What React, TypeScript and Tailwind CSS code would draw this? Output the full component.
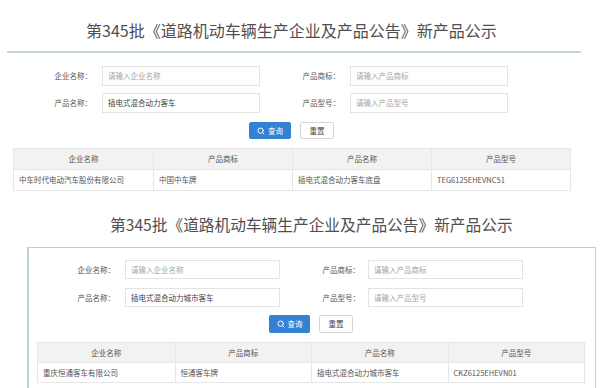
import React from 'react';
import { Search } from 'lucide-react';

type Row = { company: string; brand: string; product: string; model: string };

const font = { fontFamily: '"Noto Sans CJK SC", "Noto Sans", sans-serif' };

function Field({ label, value, placeholder, labelW, inputW, h, gap }: {
  label: string;
  value?: string;
  placeholder: string;
  labelW: string;
  inputW: string;
  h: string;
  gap: string;
}) {
  return (
    <div className={`flex items-center ${gap}`}>
      <span className={`${labelW} text-right text-[7.5px] text-[#555]`}>{label}：</span>
      <div className={`${inputW} ${h} flex items-center border border-[#e3e3e3] bg-white px-[5px] text-[7.5px]`}>
        {value ? <span className="text-[#444]">{value}</span> : <span className="text-[#a5a5a5]">{placeholder}</span>}
      </div>
    </div>
  );
}

function Buttons({ h, qw, rw }: { h: string; qw: string; rw: string }) {
  return (
    <div className="flex gap-[9px]">
      <button className={`${qw} ${h} flex items-center justify-center gap-[3px] rounded-[2px] bg-[#3480d2] text-[7.5px] text-white`}>
        <Search size={8} strokeWidth={3} />
        查询
      </button>
      <button className={`${rw} ${h} flex items-center justify-center rounded-[2px] border border-[#d5d5d5] bg-white text-[7.5px] text-[#444]`}>
        重置
      </button>
    </div>
  );
}

function ResultTable({ row, w, hh, rh }: { row: Row; w: string; hh: string; rh: string }) {
  const heads = ['企业名称', '产品商标', '产品名称', '产品型号'];
  const cells = [row.company, row.brand, row.product, row.model];
  return (
    <div className={`${w} border border-[#e6e6e6] text-[7.5px] text-[#555]`}>
      <div className={`grid grid-cols-4 ${hh} bg-[#f2f2f2]`}>
        {heads.map((t, i) => (
          <div key={t} className={`flex items-center justify-center ${i > 0 ? 'border-l border-[#e6e6e6]' : ''}`}>{t}</div>
        ))}
      </div>
      <div className={`grid grid-cols-4 ${rh} border-t border-[#e6e6e6] bg-white`}>
        {cells.map((t, i) => (
          <div key={i} className={`flex items-center px-[5px] ${i > 0 ? 'border-l border-[#e6e6e6]' : ''}`}>{t}</div>
        ))}
      </div>
    </div>
  );
}

const title = '第345批《道路机动车辆生产企业及产品公告》新产品公示';

export default function App() {
  return (
    <div className="h-[388px] w-[600px] overflow-hidden bg-white" style={font}>
      {/* first screenshot */}
      <div className="pt-[20px]">
        <h1 className="pl-[86px] text-[16px] leading-[20px] text-[#4f4f4f] whitespace-nowrap">{title}</h1>
        <div className="mt-[11px] ml-[7px] h-[2px] w-[574px] bg-[#c3d8d8]" />
        <div className="mt-[13px] ml-[12px] flex">
          <Field label="企业名称" placeholder="请输入企业名称" labelW="w-[80px]" inputW="w-[158px]" h="h-[20px]" gap="gap-[10px]" />
          <Field label="产品商标" placeholder="请输入产品商标" labelW="w-[80px]" inputW="w-[158px]" h="h-[20px]" gap="gap-[10px]" />
        </div>
        <div className="mt-[7px] ml-[12px] flex">
          <Field label="产品名称" value="插电式混合动力客车" placeholder="" labelW="w-[80px]" inputW="w-[158px]" h="h-[20px]" gap="gap-[10px]" />
          <Field label="产品型号" placeholder="请输入产品型号" labelW="w-[80px]" inputW="w-[158px]" h="h-[20px]" gap="gap-[10px]" />
        </div>
        <div className="mt-[9px] pl-[249px]">
          <Buttons h="h-[17px]" qw="w-[42px]" rw="w-[34px]" />
        </div>
        <div className="mt-[9px] ml-[13px]">
          <ResultTable
            w="w-[558px]"
            hh="h-[20px]"
            rh="h-[21px]"
            row={{ company: '中车时代电动汽车股份有限公司', brand: '中国中车牌', product: '插电式混合动力客车底盘', model: 'TEG6125EHEVNC51' }}
          />
        </div>
      </div>

      {/* second screenshot */}
      <h1 className="mt-[24px] pl-[110px] text-[15.7px] leading-[20px] text-[#4f4f4f] whitespace-nowrap">{title}</h1>
      <div className="mt-[12px] ml-[27px] w-[569px] border border-l-2 border-[#bdd0d4] pt-[12px] pb-[20px]">
        <div className="flex">
          <Field label="企业名称" placeholder="请输入企业名称" labelW="w-[86px]" inputW="w-[155px]" h="h-[19px]" gap="gap-[10px]" />
          <Field label="产品商标" placeholder="请输入产品商标" labelW="w-[80px]" inputW="w-[155px]" h="h-[19px]" gap="gap-[8px]" />
        </div>
        <div className="mt-[9px] flex">
          <Field label="产品名称" value="插电式混合动力城市客车" placeholder="" labelW="w-[86px]" inputW="w-[155px]" h="h-[19px]" gap="gap-[10px]" />
          <Field label="产品型号" placeholder="请输入产品型号" labelW="w-[80px]" inputW="w-[155px]" h="h-[19px]" gap="gap-[8px]" />
        </div>
        <div className="mt-[8px] pl-[240px]">
          <Buttons h="h-[18px]" qw="w-[41px]" rw="w-[34px]" />
        </div>
        <div className="mt-[9px] ml-[8px]">
          <ResultTable
            w="w-[548px]"
            hh="h-[19px]"
            rh="h-[20px]"
            row={{ company: '重庆恒通客车有限公司', brand: '恒通客车牌', product: '插电式混合动力城市客车', model: 'CKZ6125EHEVN01' }}
          />
        </div>
      </div>
    </div>
  );
}
